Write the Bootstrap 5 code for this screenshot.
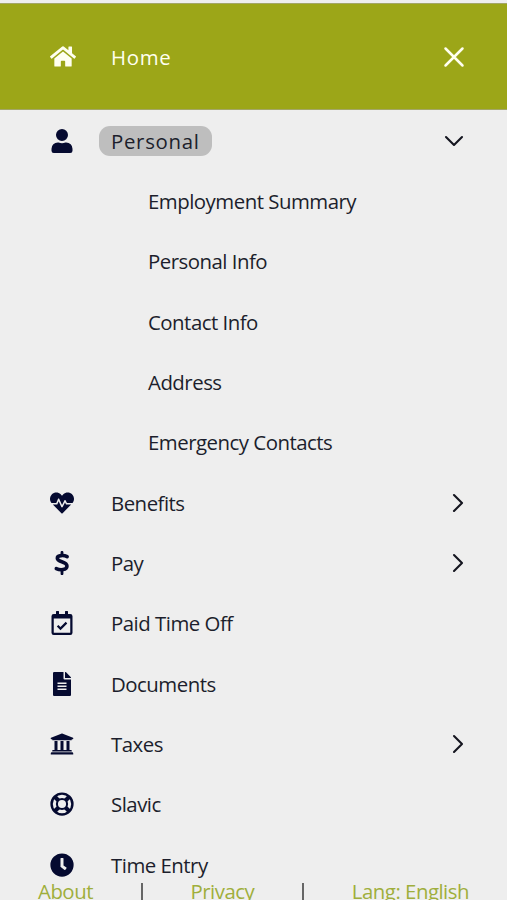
<!DOCTYPE html>
<html lang="en">
<head>
<meta charset="utf-8">
<meta name="viewport" content="width=device-width, initial-scale=1">
<title>Menu</title>
<link href="https://cdn.jsdelivr.net/npm/bootstrap@5.3.0/dist/css/bootstrap.min.css" rel="stylesheet">
<style>
body{background:#eee;color:#1c1e2c;font-family:"Open Sans","Noto Sans",sans-serif;font-size:20.4px;letter-spacing:-.5px;line-height:30px;height:900px;overflow:hidden}
a{color:inherit;text-decoration:none}
.top-bar{height:107px;background:#9ca618;color:#fffff0;margin-top:3px;border-top:1px solid #a3a667;border-bottom:1px solid #a3a667}
.menu-row{padding-left:49.500px;padding-right:41px}
.side-menu{padding-top:.6px;height:768px}
.side-menu .menu-row{height:60.33px}
.ico{width:24px;height:24px;fill:#050a30;flex:none;margin-right:37.500px}
.top-bar .ico{fill:#fffff0;width:26px;height:25px;margin-right:35.500px}
.chev{width:24px;height:24px;fill:none;stroke:#14151f;stroke-width:2.1;stroke-linecap:round;stroke-linejoin:round;flex:none}
.top-bar .chev{stroke:#fffff0;stroke-width:2.5}
.spaced{letter-spacing:.7px}
.active-pill{background:#bebebe;border-radius:11px;margin-left:-12.500px;padding:0 12px 0 12.500px;font-weight:500}
.side-menu .sub-row{padding-left:148px}
.page-foot{color:#9fae3c;height:22px;line-height:26px;padding-left:38px;padding-right:38px}
.divider{width:2px;height:17px;background:#666;margin-top:5px}
</style>
<script src="https://cdn.jsdelivr.net/npm/bootstrap@5.3.0/dist/js/bootstrap.bundle.min.js"></script>
</head>
<body class="d-flex flex-column">
<header class="top-bar menu-row d-flex align-items-center flex-shrink-0">
<svg class="ico" viewBox="0 0 576 512"><path d="M280.4 148.300L96 300.100V464a16 16 0 0 0 16 16l112-.3a16 16 0 0 0 16-16V368a16 16 0 0 1 16-16h64a16 16 0 0 1 16 16v95.600a16 16 0 0 0 16 16.100L464 480a16 16 0 0 0 16-16V300L295.700 148.300a12.200 12.200 0 0 0-15.300 0zM571.600 251.500L488 182.600V44a12 12 0 0 0-12-12h-56a12 12 0 0 0-12 12v72.600L318.500 43a48 48 0 0 0-61 0L4.300 251.500a12 12 0 0 0-1.600 16.900l25.500 31a12 12 0 0 0 16.900 1.600l235.300-193.700a12.200 12.200 0 0 1 15.300 0L530.900 301a12 12 0 0 0 16.900-1.600l25.500-31a12 12 0 0 0-1.700-16.900z"/></svg>
<a href="#" class="spaced">Home</a>
<svg class="chev ms-auto" viewBox="0 0 24 24"><path d="M3.500 3.500l17 17M20.500 3.500l-17 17"/></svg>
</header>
<nav class="side-menu flex-shrink-0">
<div class="menu-row d-flex align-items-center"><svg class="ico" viewBox="0 0 512 512"><path d="M256 256a128 128 0 1 0 0-256 128 128 0 0 0 0 256zm90 32h-17a174 174 0 0 1-146 0h-17A134 134 0 0 0 32 422v42a48 48 0 0 0 48 48h352a48 48 0 0 0 48-48v-42a134 134 0 0 0-134-134z"/></svg><a href="#" class="spaced active-pill">Personal</a><svg class="chev ms-auto" viewBox="0 0 24 24"><path d="M4 8l8 8 8-8"/></svg></div>
<a href="#" class="menu-row sub-row d-flex align-items-center">Employment Summary</a>
<a href="#" class="menu-row sub-row d-flex align-items-center">Personal Info</a>
<a href="#" class="menu-row sub-row d-flex align-items-center">Contact Info</a>
<a href="#" class="menu-row sub-row d-flex align-items-center">Address</a>
<a href="#" class="menu-row sub-row d-flex align-items-center">Emergency Contacts</a>
<a href="#" class="menu-row d-flex align-items-center"><svg class="ico" viewBox="0 0 512 512"><path d="M320.200 243.800l-49.700 99.400c-6 12.100-23.400 11.700-28.900-.6l-56.900-126.300-30 71.700H60.600l182.500 186.500a18 18 0 0 0 25.700 0L451.400 288H342.300zM473.700 73.900l-2.400-2.500c-51.500-52.600-135.800-52.600-187.400 0L256 100l-27.900-28.500c-51.500-52.700-135.900-52.700-187.400 0l-2.400 2.400C-10.400 123.700-12.500 203 31 256h102.400l35.900-86.200c5.400-12.900 23.600-13.200 29.400-.4l58.200 129.300 49-97.900c5.900-11.800 22.700-11.800 28.600 0l27.600 55.200H481c43.500-53 41.400-132.300-7.300-182.100z"/></svg>Benefits<svg class="chev ms-auto" viewBox="0 0 24 24"><path d="M12 4l8 8-8 8"/></svg></a>
<a href="#" class="menu-row d-flex align-items-center"><svg class="ico" viewBox="0 0 512 512"><g fill="none" stroke="#050a30"><path d="M366 120c-60-30-210-38-210 34 0 88 206 62 206 168 0 90-148 92-228 54" stroke-width="76" stroke-linecap="round"/><path d="M256 28v70M256 410v76" stroke-width="60" stroke-linecap="round"/></g></svg>Pay<svg class="chev ms-auto" viewBox="0 0 24 24"><path d="M12 4l8 8-8 8"/></svg></a>
<a href="#" class="menu-row d-flex align-items-center"><svg class="ico" viewBox="0 0 512 512"><path fill-rule="evenodd" d="M432 64h-48V12a12 12 0 0 0-12-12h-40a12 12 0 0 0-12 12v52H192V12a12 12 0 0 0-12-12h-40a12 12 0 0 0-12 12v52H80a48 48 0 0 0-48 48v352a48 48 0 0 0 48 48h352a48 48 0 0 0 48-48V112a48 48 0 0 0-48-48zm-6 400H86a6 6 0 0 1-6-6V160h352v298a6 6 0 0 1-6 6z"/><path d="M162 314l62 62 128-128" fill="none" stroke="#050a30" stroke-width="46"/></svg>Paid Time Off</a>
<a href="#" class="menu-row d-flex align-items-center"><svg class="ico" viewBox="0 0 512 512"><path fill-rule="evenodd" d="M288 136V0H88a24 24 0 0 0-24 24v464a24 24 0 0 0 24 24h336a24 24 0 0 0 24-24V160H312a24 24 0 0 1-24-24zM160 224h192v32H160zm0 64h192v32H160zm0 64h192v32H160zM448 122v6H320V0h6a24 24 0 0 1 17 7l98 98a24 24 0 0 1 7 17z"/></svg>Documents</a>
<a href="#" class="menu-row d-flex align-items-center"><svg class="ico" viewBox="0 0 512 512"><path d="M496 128v16a8 8 0 0 1-8 8h-24v12c0 7-6 12-13 12H61c-7 0-13-5-13-12v-12H24a8 8 0 0 1-8-8v-16a8 8 0 0 1 5-7l232-88a8 8 0 0 1 6 0l232 88a8 8 0 0 1 5 7zm-24 304H40a24 24 0 0 0-24 24v16a8 8 0 0 0 8 8h464a8 8 0 0 0 8-8v-16a24 24 0 0 0-24-24zM96 192v192H60c-7 0-12 5-12 12v20h416v-20c0-7-5-12-12-12h-36V192h-64v192h-64V192h-64v192h-64V192z"/></svg>Taxes<svg class="chev ms-auto" viewBox="0 0 24 24"><path d="M12 4l8 8-8 8"/></svg></a>
<a href="#" class="menu-row d-flex align-items-center"><svg class="ico" viewBox="0 0 512 512"><g fill="none" stroke="#050a30"><circle cx="256" cy="256" r="222" stroke-width="52"/><circle cx="256" cy="256" r="108" stroke-width="44"/><path d="M100 100l82 82M412 100l-82 82M100 412l82-82M412 412l-82-82" stroke-width="88"/></g></svg>Slavic</a>
<a href="#" class="menu-row d-flex align-items-center"><svg class="ico" viewBox="0 0 512 512"><path fill-rule="evenodd" d="M256 8a248 248 0 1 0 0 496 248 248 0 0 0 0-496zm-20 96h40a12 12 0 0 1 12 12v148l62 46a12 12 0 0 1 2 17l-24 32a12 12 0 0 1-17 2l-82-60a12 12 0 0 1-5-10V116a12 12 0 0 1 12-12z"/></svg>Time Entry</a>
</nav>
<footer class="page-foot d-flex justify-content-between flex-shrink-0">
<a href="#">About</a><span class="divider"></span><a href="#">Privacy</a><span class="divider"></span><a href="#">Lang: English</a>
</footer>
</body>
</html>
